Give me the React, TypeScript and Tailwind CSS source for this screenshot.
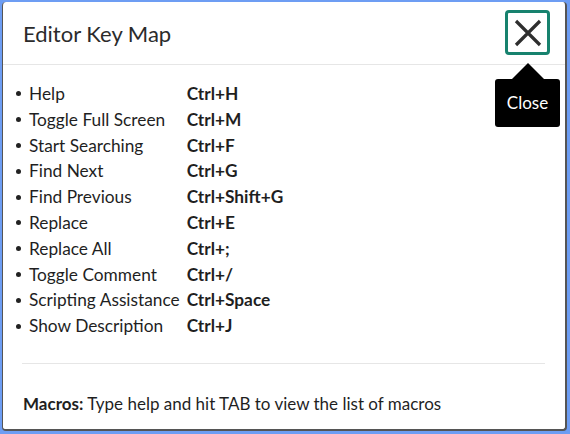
import React from 'react';

const shortcuts = [
  ['Help', 'Ctrl+H'],
  ['Toggle Full Screen', 'Ctrl+M'],
  ['Start Searching', 'Ctrl+F'],
  ['Find Next', 'Ctrl+G'],
  ['Find Previous', 'Ctrl+Shift+G'],
  ['Replace', 'Ctrl+E'],
  ['Replace All', 'Ctrl+;'],
  ['Toggle Comment', 'Ctrl+/'],
  ['Scripting Assistance', 'Ctrl+Space'],
  ['Show Description', 'Ctrl+J'],
];

export default function App() {
  return (
    <div
      className="w-[570px] h-[434px] bg-[#6d9df3] pt-[2px] pl-[2px] pr-[3px] pb-[3px]"
      style={{ fontFamily: 'Lato, "Noto Sans", sans-serif' }}
    >
      <div className="relative h-full bg-white rounded-[4px] border-l border-r-2 border-b-2 border-[#555] text-[#1f1f1f]">
        {/* Header */}
        <div className="flex items-center justify-between h-[63px] border-b border-[#e6e6e6] pl-[20px] pr-[15px]">
          <h1 className="text-[22px] text-[#2b2b2b]">Editor Key Map</h1>
          <button className="w-[45px] h-[45px] mt-[-1px] flex items-center justify-center border-[3px] border-[#17826e] rounded-[4px]">
            <svg width="30" height="30" viewBox="0 0 30 30">
              <path d="M3 3 L27 27 M27 3 L3 27" stroke="#2e2e2e" strokeWidth="3.2" />
            </svg>
          </button>
        </div>

        {/* Tooltip */}
        <div className="absolute left-[492px] top-[61px] flex flex-col items-center">
          <div className="w-0 h-0 border-l-[16px] border-r-[16px] border-b-[16px] border-l-transparent border-r-transparent border-b-black" />
          <div className="w-[65px] h-[48px] bg-black rounded-[3px] flex items-center justify-center text-white text-[17px]">
            Close
          </div>
        </div>

        {/* Body */}
        <div className="pl-[12px] pr-[20px] pt-[16px]">
          <div className="grid grid-cols-[14px_auto_1fr] text-[17.3px] leading-[25.8px]">
            {shortcuts.map(([label, keys]) => (
              <React.Fragment key={label}>
                <span className="flex items-center">
                  <span className="ml-[1px] w-[5px] h-[5px] rounded-full bg-[#222]" />
                </span>
                <span className="pr-[7px]">{label}</span>
                <span className="font-bold">{keys}</span>
              </React.Fragment>
            ))}
          </div>
          <div className="mt-[24px] ml-[7px] border-t border-[#e6e6e6]" />
          <p className="mt-[27px] ml-[8px] text-[17px]">
            <span className="font-bold">Macros:</span> Type help and hit TAB to view the list of macros
          </p>
        </div>
      </div>
    </div>
  );
}
